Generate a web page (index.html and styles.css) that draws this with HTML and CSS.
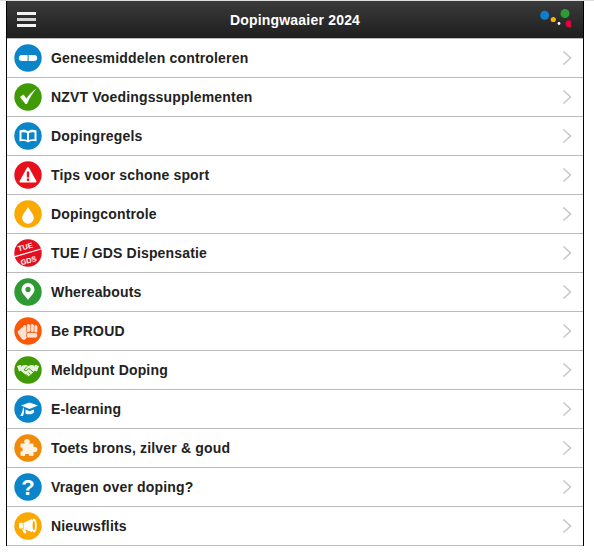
FILE: index.html
```html
<!DOCTYPE html>
<html lang="nl">
<head>
<meta charset="utf-8">
<title>Dopingwaaier 2024</title>
<link rel="stylesheet" href="styles.css">
</head>
<body>
<div class="app">
  <header class="bar">
    <div class="burger"><span></span><span class="mid"></span><span></span></div>
    <h1 class="title">Dopingwaaier 2024</h1>
    <svg class="logo" width="36" height="24" viewBox="0 0 36 24"><circle cx="9.700" cy="7.200" r="4.500" fill="#0a7fd0"/><circle cx="18.300" cy="11.500" r="2.600" fill="#f9b000"/><circle cx="30" cy="5.500" r="4.500" fill="#2f9b35"/><circle cx="34" cy="15.800" r="3.500" fill="#e4003a"/><circle cx="24" cy="15.500" r="1.400" fill="#fff"/></svg>
  </header>
  <ul class="menu">
    <li class="row"><svg class="ic" viewBox="0 0 28 28"><circle cx="14" cy="14" r="13.700" fill="#0a85c9"/><rect x="4.800" y="11" width="18.400" height="6" rx="3" fill="#fff"/><rect x="13.600" y="10" width="1" height="8" fill="#0a85c9"/></svg><span class="label">Geneesmiddelen controleren</span><svg class="chev" viewBox="0 0 10 16"><path d="M1.500 1.500 8.500 8 1.500 14.500"/></svg></li>
    <li class="row"><svg class="ic" viewBox="0 0 28 28"><circle cx="14" cy="14" r="13.700" fill="#3f9a05"/><path d="M6 14l3.500-2.500 3 4c2.500-4 5.500-7 10-10-3.500 4-7 9.500-9.500 15.500h-1.500z" fill="#fff"/></svg><span class="label">NZVT Voedingssupplementen</span><svg class="chev" viewBox="0 0 10 16"><path d="M1.500 1.500 8.500 8 1.500 14.500"/></svg></li>
    <li class="row"><svg class="ic" viewBox="0 0 28 28"><circle cx="14" cy="14" r="13.700" fill="#0a85c9"/><path d="M5.500 8.500c3-1 6-1 8.500.8 2.500-1.800 5.500-1.800 8.500-.8V19.500c-3-.8-6-.6-8.500 1-2.500-1.600-5.500-1.800-8.500-1z" fill="#fff"/><path d="M7.500 10.500c2-.5 4-.3 5.500.5v7c-1.500-.8-3.500-1-5.500-.7zM20.500 10.500c-2-.5-4-.3-5.500.5v7c1.500-.8 3.500-1 5.500-.7z" fill="#0a85c9"/></svg><span class="label">Dopingregels</span><svg class="chev" viewBox="0 0 10 16"><path d="M1.500 1.500 8.500 8 1.500 14.500"/></svg></li>
    <li class="row"><svg class="ic" viewBox="0 0 28 28"><circle cx="14" cy="14" r="13.700" fill="#e8111b"/><path d="M14 7 21.500 20.500H6.500z" fill="#fff" stroke="#fff" stroke-width="2" stroke-linejoin="round"/><rect x="12.800" y="10.500" width="2.400" height="6" fill="#e8111b"/><rect x="12.800" y="17.500" width="2.400" height="2.400" fill="#e8111b"/></svg><span class="label">Tips voor schone sport</span><svg class="chev" viewBox="0 0 10 16"><path d="M1.500 1.500 8.500 8 1.500 14.500"/></svg></li>
    <li class="row"><svg class="ic" viewBox="0 0 28 28"><circle cx="14" cy="14" r="13.700" fill="#fba900"/><path d="M14 7c2 4 5.800 7 5.800 11a5.800 5.800 0 0 1-11.600 0C8.200 14 12 11 14 7z" fill="#fff"/></svg><span class="label">Dopingcontrole</span><svg class="chev" viewBox="0 0 10 16"><path d="M1.500 1.500 8.500 8 1.500 14.500"/></svg></li>
    <li class="row"><svg class="ic" viewBox="0 0 28 28"><circle cx="14" cy="14" r="13.700" fill="#e3101f"/><path d="M.8 17.700 27 10" stroke="#fff" stroke-width="1.300"/><text x="12" y="10.500" class="tue" transform="rotate(-16 12 10.500)">TUE</text><text x="15.300" y="24" class="tue" transform="rotate(-16 15.300 24)">GDS</text></svg><span class="label">TUE / GDS Dispensatie</span><svg class="chev" viewBox="0 0 10 16"><path d="M1.500 1.500 8.500 8 1.500 14.500"/></svg></li>
    <li class="row"><svg class="ic" viewBox="0 0 28 28"><circle cx="14" cy="14" r="13.700" fill="#2f9a33"/><path fill-rule="evenodd" d="M14 5a6.500 6.500 0 0 1 6.500 6.500c0 4-4 6.500-6.500 10.500-2.500-4-6.500-6.500-6.500-10.500A6.500 6.500 0 0 1 14 5zm0 3.800a2.600 2.600 0 1 0 0 5.200 2.600 2.600 0 0 0 0-5.200z" fill="#fff"/></svg><span class="label">Whereabouts</span><svg class="chev" viewBox="0 0 10 16"><path d="M1.500 1.500 8.500 8 1.500 14.500"/></svg></li>
    <li class="row"><svg class="ic" viewBox="0 0 28 28"><circle cx="14" cy="14" r="13.700" fill="#fd5604"/><path d="M3.500 14.500 8.500 10l3 3 3 6-3.500 3.500c-1.500.8-2.500 0-3.500-1C6 19.500 4 17 3.500 14.500z" fill="#fde3d5"/><rect x="9" y="8" width="3.200" height="8" rx="1.500" fill="#fde3d5"/><rect x="12.800" y="7" width="3.200" height="8" rx="1.500" fill="#fde3d5"/><rect x="16.600" y="7" width="3.200" height="8" rx="1.500" fill="#fde3d5"/><rect x="20.400" y="8" width="3" height="8" rx="1.500" fill="#fde3d5"/><rect x="12.500" y="15.500" width="11" height="5.500" rx="2" fill="#fde3d5" stroke="#fd5604" stroke-width=".8"/></svg><span class="label">Be PROUD</span><svg class="chev" viewBox="0 0 10 16"><path d="M1.500 1.500 8.500 8 1.500 14.500"/></svg></li>
    <li class="row"><svg class="ic" viewBox="0 0 28 28"><circle cx="14" cy="14" r="13.700" fill="#3f9a05"/><path d="M3 10 7 8.800 8.800 14 5 15.500zM25 10l-4-1.200L19.200 14 23 15.500z" fill="#e6f2dc"/><path d="M8.200 9.500l4-.5 2 1 3-1 3 .5 1.300 4.500-5 5-2.500 1.500-2-1.500-5-4z" fill="#e6f2dc"/><path d="M13 10.500l-3 3.500 2 .8 3-2.300 4.700 4M12 18.500l2 1.500M14.500 16.500l2 2" stroke="#3f9a05" stroke-width=".9" fill="none"/></svg><span class="label">Meldpunt Doping</span><svg class="chev" viewBox="0 0 10 16"><path d="M1.500 1.500 8.500 8 1.500 14.500"/></svg></li>
    <li class="row"><svg class="ic" viewBox="0 0 28 28"><circle cx="14" cy="14" r="13.700" fill="#0a85c9"/><path d="M7 10.500 15.500 7.500 24 10.500l-8.500 3.500z" fill="#fff"/><path d="M9 12.500c-.2 3-1 5.500-2.800 8.500h2.800c1-2.500 1.200-5 1-8z" fill="#fff"/><path d="M11.500 14.500l4 1.700 4.500-1.700v3c-2 2-6 2.500-8.500 1z" fill="#fff"/></svg><span class="label">E-learning</span><svg class="chev" viewBox="0 0 10 16"><path d="M1.500 1.500 8.500 8 1.500 14.500"/></svg></li>
    <li class="row"><svg class="ic" viewBox="0 0 28 28"><circle cx="14" cy="14" r="13.700" fill="#f28a07"/><rect x="6.500" y="9.500" width="13" height="12.500" rx="1" fill="#fff3e4"/><circle cx="13" cy="7.800" r="2.800" fill="#fff3e4"/><circle cx="20.500" cy="15.500" r="2.800" fill="#fff3e4"/><circle cx="6.500" cy="15.500" r="2.300" fill="#f28a07"/><circle cx="13" cy="22" r="2.300" fill="#f28a07"/></svg><span class="label">Toets brons, zilver &amp; goud</span><svg class="chev" viewBox="0 0 10 16"><path d="M1.500 1.500 8.500 8 1.500 14.500"/></svg></li>
    <li class="row"><svg class="ic" viewBox="0 0 28 28"><circle cx="14" cy="14" r="13.700" fill="#0a85c9"/><text x="14" y="21.500" class="qm">?</text></svg><span class="label">Vragen over doping?</span><svg class="chev" viewBox="0 0 10 16"><path d="M1.500 1.500 8.500 8 1.500 14.500"/></svg></li>
    <li class="row"><svg class="ic" viewBox="0 0 28 28"><circle cx="14" cy="14" r="13.700" fill="#fba900"/><rect x="5" y="10.800" width="3.800" height="5.800" rx=".8" fill="#fff"/><path d="M9.500 10.800 18 7v13.200l-8.500-3.500z" fill="#fff"/><path d="M8 17.300h3l1.500 4H10z" fill="#fff"/><ellipse cx="20" cy="13.600" rx="2.800" ry="7" fill="#fff"/><ellipse cx="19.800" cy="13.600" rx="1.200" ry="4.500" fill="#fba900"/></svg><span class="label">Nieuwsflits</span><svg class="chev" viewBox="0 0 10 16"><path d="M1.500 1.500 8.500 8 1.500 14.500"/></svg></li>
  </ul>
</div>
</body>
</html>
```
FILE: styles.css
```css
html, body { margin: 0; padding: 0; background: #fff; }
body { font-family: "Liberation Sans", Arial, sans-serif; padding: 0 10px 0 6px; border-top: 1px solid #ddd; overflow: hidden; }
.app { border-left: 1px solid #000; border-right: 1px solid #000; }
.bar { height: 37px; display: flex; align-items: center; justify-content: space-between; padding: 0 12px 0 10px; background: linear-gradient(#3a3a3a, #1f1f1f); border-bottom: 1px solid #bbb; position: relative; }
.burger { display: flex; flex-direction: column; gap: 3px; width: 18.500px; }
.burger span { display: block; height: 3px; background: #f2f2f2; }
.burger .mid { background: #d4d4d4; }
.title { position: absolute; left: 0; right: 0; margin: 0; text-align: center; color: #fff; font-size: 14px; font-weight: bold; letter-spacing: .2px; }
.menu { list-style: none; margin: 0; padding: 0; }
.row { height: 38px; display: flex; align-items: center; border-bottom: 1px solid #bbb; padding: 0 11px 0 7px; background: #fff; }
.ic { width: 28px; height: 28px; flex: none; }
.label { flex: 1; margin-left: 9px; font-size: 14px; font-weight: bold; color: #222; letter-spacing: .17px; }
.chev { width: 10px; height: 16px; flex: none; }
.chev path { fill: none; stroke: #c8c8c8; stroke-width: 1.6; }
.tue { font: bold 7.500px "Liberation Sans", sans-serif; fill: #fff; text-anchor: middle; }
.qm { font: bold 22px "Liberation Sans", sans-serif; fill: #fff; text-anchor: middle; }
```
